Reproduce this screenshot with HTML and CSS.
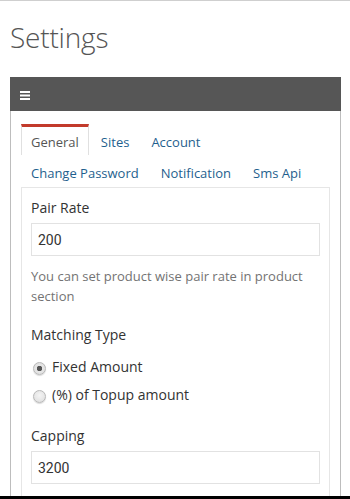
FILE: index.html
```html
<!DOCTYPE html>
<html lang="en">
<head>
<meta charset="utf-8">
<title>Settings</title>
<link rel="stylesheet" href="styles.css">
</head>
<body>
<h1 class="page-title">Settings</h1>
<div class="card">
  <div class="card-header">
    <svg class="menu-icon" width="10" height="9" viewBox="0 0 10 9" aria-hidden="true">
      <rect x="0" y="0" width="10" height="2" fill="#fff"/>
      <rect x="0" y="3.5" width="10" height="2" fill="#fff"/>
      <rect x="0" y="7" width="10" height="2" fill="#fff"/>
    </svg>
  </div>
  <div class="card-body">
    <ul class="tabs">
      <li class="tab active"><a href="#">General</a></li>
      <li class="tab"><a href="#">Sites</a></li>
      <li class="tab"><a href="#">Account</a></li>
      <li class="tab"><a href="#">Change Password</a></li>
      <li class="tab"><a href="#">Notification</a></li>
      <li class="tab"><a href="#">Sms Api</a></li>
    </ul>
    <div class="panel">
      <div class="form-group group-pair">
        <label class="field-label">Pair Rate</label>
        <input class="text-input" type="text" value="200">
        <p class="help">You can set product wise pair rate in product section</p>
      </div>
      <div class="form-group group-matching">
        <label class="field-label matching-label">Matching Type</label>
        <label class="radio-row"><input class="radio" type="radio" name="mt" checked><span>Fixed Amount</span></label>
        <label class="radio-row"><input class="radio" type="radio" name="mt"><span>(%) of Topup amount</span></label>
      </div>
      <div class="form-group">
        <label class="field-label">Capping</label>
        <input class="text-input" type="text" value="3200">
      </div>
    </div>
  </div>
</div>
<div class="screen-edge"></div>
</body>
</html>
```
FILE: styles.css
```css
html, body {
  margin: 0;
  padding: 0;
  background: #fff;
}
body {
  border-top: 1px solid #cfcfcf;
  font-family: "Open Sans", "Noto Sans", sans-serif;
  color: #333;
  overflow: hidden;
  height: 498px;
}
.page-title {
  margin: 16px 10px 0;
  font-size: 28px;
  line-height: 40px;
  font-weight: 300;
  color: #555;
  letter-spacing: -0.2px;
}
.card {
  margin: 20px 9px 0 10px;
  border: 1px solid #bdbdbd;
  border-top: 0;
}
.card-header {
  height: 34px;
  background: #565656;
  display: flex;
  align-items: center;
  padding-left: 10px;
  margin: 0 -1px;
}
.menu-icon {
  display: block;
  margin-top: 2px;
}
.card-body {
  padding: 13px 10px 0;
}
.tabs {
  list-style: none;
  margin: 0;
  padding: 0;
  display: flex;
  flex-wrap: wrap;
}
.tab {
  margin-right: 2px;
}
.tab a {
  display: block;
  padding: 6px 9px 3px;
  border: 1px solid transparent;
  border-top-width: 2px;
  border-bottom: 0;
  font-size: 13px;
  line-height: 20px;
  color: #1f5f8e;
  text-decoration: none;
}
.tab.active a {
  color: #555;
  border-color: #e0e0e0;
  border-top-color: #c23a2b;
  border-top-width: 3px;
  padding-top: 5px;
}
.panel {
  margin-top: 1px;
  border: 1px solid #e6e6e6;
  border-bottom: 0;
  padding: 10px 9px;
}
.form-group {
  margin-bottom: 21px;
}
.group-pair {
  margin-bottom: 19px;
}
.field-label {
  display: block;
  font-size: 14px;
  line-height: 20px;
  margin-bottom: 5px;
  color: #333;
}
.matching-label {
  margin-bottom: 12px;
}
.text-input {
  display: block;
  box-sizing: border-box;
  width: 100%;
  height: 33px;
  margin: 0;
  padding: 0 6px;
  border: 1px solid #e2e2e2;
  font-family: Roboto, "Liberation Sans", sans-serif;
  font-size: 14px;
  color: #333;
  background: #fff;
  outline: none;
}
.help {
  margin: 10px 0 0;
  font-size: 13px;
  line-height: 20px;
  color: #737373;
}
.radio-row {
  display: flex;
  align-items: center;
  height: 20px;
  font-size: 14px;
  line-height: 20px;
  color: #333;
  margin-bottom: 8px;
}
.radio-row:last-child {
  margin-bottom: 0;
}
.radio {
  -webkit-appearance: none;
  appearance: none;
  box-sizing: border-box;
  width: 13px;
  height: 13px;
  margin: 2px 6px 0 2px;
  border-radius: 50%;
  border: 1px solid #b8b8b8;
  background: radial-gradient(circle at 50% 40%, #f4f4f4 0%, #dcdcdc 100%);
  box-shadow: 0 1px 1px rgba(0,0,0,0.15);
}
.radio:checked {
  background: radial-gradient(circle, #555 0 2.5px, #e6e6e6 3px, #dcdcdc 100%);
}
.screen-edge {
  position: fixed;
  left: 0;
  right: 0;
  bottom: 0;
  height: 3px;
  background: #000;
}
```
